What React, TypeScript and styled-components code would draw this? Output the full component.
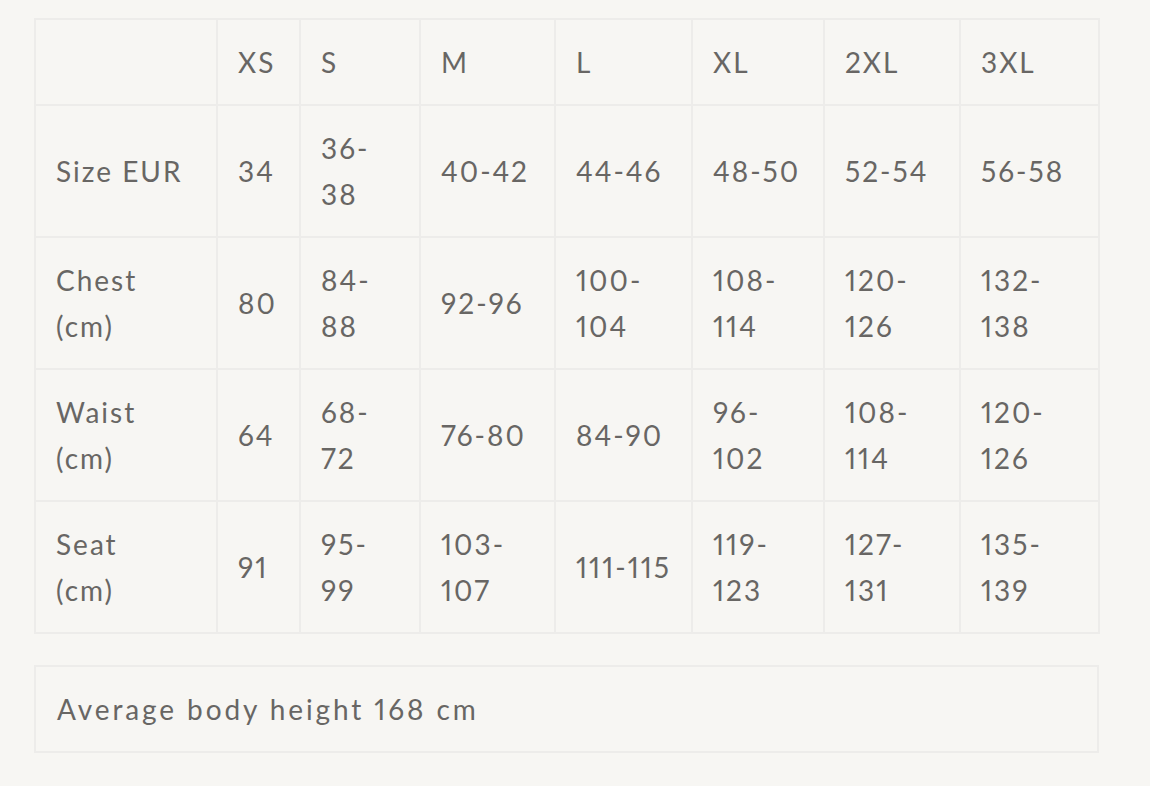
import styled, { createGlobalStyle } from 'styled-components';

const sizes = ['XS', 'S', 'M', 'L', 'XL', '2XL', '3XL'];

const rows = [
  { label: 'Size EUR', unit: '', values: ['34', '36-38', '40-42', '44-46', '48-50', '52-54', '56-58'] },
  { label: 'Chest', unit: '(cm)', values: ['80', '84-88', '92-96', '100-104', '108-114', '120-126', '132-138'] },
  { label: 'Waist', unit: '(cm)', values: ['64', '68-72', '76-80', '84-90', '96-102', '108-114', '120-126'] },
  { label: 'Seat', unit: '(cm)', values: ['91', '95-99', '103-107', '111-115', '119-123', '127-131', '135-139'] },
];

const columnWidths = [182, 83, 120, 135, 137, 132, 136, 139];

function App() {
  return (
    <>
      <GlobalStyle />
      <StyledPage>
        <StyledTable>
          <colgroup>
            {columnWidths.map((width, index) => (
              <col key={index} style={{ width }} />
            ))}
          </colgroup>
          <thead>
            <tr>
              <StyledCell />
              {sizes.map((size) => (
                <StyledCell key={size}>{size}</StyledCell>
              ))}
            </tr>
          </thead>
          <tbody>
            {rows.map((row) => (
              <tr key={row.label}>
                <StyledCell>
                  {row.label}
                  {row.unit && <StyledUnit> {row.unit}</StyledUnit>}
                </StyledCell>
                {row.values.map((value, index) => (
                  <StyledCell key={index}>{value}</StyledCell>
                ))}
              </tr>
            ))}
          </tbody>
        </StyledTable>

        <StyledNote>Average body height 168 cm</StyledNote>
      </StyledPage>
    </>
  );
}

export default App;

const GlobalStyle = createGlobalStyle`
  body {
    margin: 0;
    background-color: #f7f6f3;
    font-family: Lato, 'Liberation Sans', sans-serif;
    font-variant-numeric: proportional-nums;
    color: #686664;
  }
`;

const StyledPage = styled.div`
  display: flex;
  flex-direction: column;
  gap: 31px;
  width: 1065px;
  padding: 18px 0 0 34px;
`;

const StyledTable = styled.table`
  width: 1065px;
  table-layout: fixed;
  border-collapse: collapse;
  border: 2px solid #edecea;
`;

const StyledCell = styled.td`
  padding: 19px 19px 19px 20px;
  border: 2px solid #edecea;
  font-size: 28px;
  line-height: 46px;
  letter-spacing: 2px;
  text-align: left;
  vertical-align: middle;
`;

const StyledUnit = styled.span`
  display: block;
`;

const StyledNote = styled.div`
  padding: 19px 21px;
  border: 2px solid #edecea;
  font-size: 28px;
  line-height: 46px;
  letter-spacing: 2.9px;
`;
